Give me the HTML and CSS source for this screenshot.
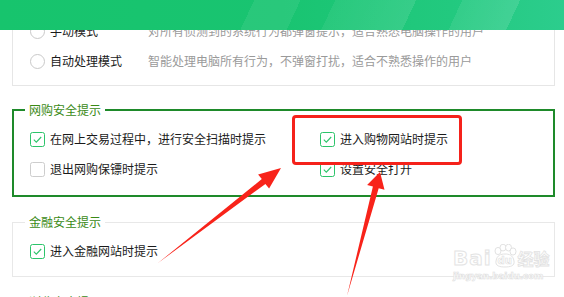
FILE: index.html
```html
<!DOCTYPE html>
<html lang="zh-CN">
<head>
<meta charset="utf-8">
<title>安全提示设置</title>
<link rel="stylesheet" href="styles.css">
</head>
<body>
<div class="page">
  <header class="topbar"></header>
  <main class="content">
    <section class="panel panel-modes">
      <div class="mode-row">
        <span class="radio"></span>
        <span class="mode-name">手动模式</span>
        <span class="mode-desc">对所有侦测到的系统行为都弹窗提示，适合熟悉电脑操作的用户</span>
      </div>
      <div class="mode-row">
        <span class="radio"></span>
        <span class="mode-name">自动处理模式</span>
        <span class="mode-desc">智能处理电脑所有行为，不弹窗打扰，适合不熟悉操作的用户</span>
      </div>
    </section>

    <fieldset class="group group-active">
      <legend>网购安全提示</legend>
      <div class="opts opts-two">
        <label class="opt"><span class="cb on"><svg viewBox="0 0 15 15"><rect x="0.5" y="0.5" width="14" height="14" rx="2"/><polyline points="3.8,7.6 6.3,10.1 11.2,5"/></svg></span>在网上交易过程中，进行安全扫描时提示</label>
        <label class="opt"><span class="cb on"><svg viewBox="0 0 15 15"><rect x="0.5" y="0.5" width="14" height="14" rx="2"/><polyline points="3.8,7.6 6.3,10.1 11.2,5"/></svg></span>进入购物网站时提示</label>
        <label class="opt"><span class="cb"><svg viewBox="0 0 15 15"><rect x="0.5" y="0.5" width="14" height="14" rx="2"/></svg></span>退出网购保镖时提示</label>
        <label class="opt"><span class="cb on"><svg viewBox="0 0 15 15"><rect x="0.5" y="0.5" width="14" height="14" rx="2"/><polyline points="3.8,7.6 6.3,10.1 11.2,5"/></svg></span>设置安全打开</label>
      </div>
    </fieldset>

    <fieldset class="group">
      <legend>金融安全提示</legend>
      <div class="opts">
        <label class="opt"><span class="cb on"><svg viewBox="0 0 15 15"><rect x="0.5" y="0.5" width="14" height="14" rx="2"/><polyline points="3.8,7.6 6.3,10.1 11.2,5"/></svg></span>进入金融网站时提示</label>
      </div>
    </fieldset>

    <fieldset class="group">
      <legend>浏览安全提示</legend>
      <div class="opts">
        <label class="opt"><span class="cb on"><svg viewBox="0 0 15 15"><rect x="0.5" y="0.5" width="14" height="14" rx="2"/><polyline points="3.8,7.6 6.3,10.1 11.2,5"/></svg></span>进入网站时提示</label>
      </div>
    </fieldset>
  </main>

  <div class="highlight"></div>

  <svg class="arrows" viewBox="0 0 564 297" width="564" height="297">
    <polygon points="158,263 261.8,179.1 258.1,174.4 281,168 269.1,188.6 265.4,183.9"/>
    <polygon points="347,296 372.9,186.6 367.1,185 380,172 384.5,189.8 378.7,188.2"/>
  </svg>

  <div class="watermark">
    <div class="wm-top">
      <span class="wm-bai">Bai</span>
      <span class="wm-paw">
        <svg viewBox="0 0 26 24" width="26" height="24">
          <ellipse cx="6" cy="7" rx="3" ry="3.6"/>
          <ellipse cx="11" cy="3.6" rx="3" ry="3.4"/>
          <ellipse cx="16.5" cy="3.6" rx="3" ry="3.4"/>
          <ellipse cx="21" cy="7.5" rx="3" ry="3.6"/>
          <path d="M4 17 C5 11 9 10 13 10 C17 10 21 11 22 17 C23 22 18 23 13 23 C8 23 3 22 4 17 Z"/>
        </svg>
        <span class="wm-du">du</span>
      </span>
      <span class="wm-jy">经验</span>
    </div>
    <div class="wm-url">jingyan.baidu.com</div>
  </div>
</div>
</body>
</html>
```

FILE: styles.css
```css
* { box-sizing: border-box; }

html, body {
  margin: 0;
  padding: 0;
  background: #ffffff;
}

body {
  font-family: "Noto Sans CJK SC", "Noto Sans", sans-serif;
  font-size: 12px;
  color: #222;
  overflow: hidden;
}

.page {
  position: relative;
  width: 564px;
  height: 297px;
  overflow: hidden;
}

.topbar {
  position: absolute;
  top: 0;
  left: 0;
  width: 564px;
  height: 30px;
  z-index: 5;
  background:
    linear-gradient(115deg, rgba(255,255,255,0) 0%, rgba(255,255,255,0) 44%, rgba(255,255,255,0.07) 44%, rgba(255,255,255,0.07) 52%, rgba(255,255,255,0) 52%, rgba(255,255,255,0) 58%, rgba(255,255,255,0.06) 58%, rgba(255,255,255,0.10) 72%, rgba(255,255,255,0) 72%, rgba(255,255,255,0) 80%, rgba(255,255,255,0.08) 80%, rgba(255,255,255,0.12) 90%, rgba(255,255,255,0) 90%),
    linear-gradient(90deg, #17c46d 0%, #19c471 50%, #22c97f 80%, #2ccd8d 100%);
}

.content {
  padding: 0 9px 0 12px;
  display: flex;
  flex-direction: column;
}

.panel {
  border: 1px solid #e6e6e6;
  padding: 15px 0 9px 17px;
  display: flex;
  flex-direction: column;
}

.mode-row {
  height: 30px;
  display: flex;
  align-items: center;
  line-height: 16px;
}

.radio {
  width: 15px;
  height: 15px;
  border: 1px solid #c9c9c9;
  border-radius: 50%;
  background: #fff;
  margin-right: 5px;
  flex: none;
}

.mode-name {
  width: 98px;
  color: #1a1a1a;
  flex: none;
}

.mode-desc {
  color: #9a9a9a;
  white-space: nowrap;
}

.group {
  margin: 16px 0 0 0;
  min-width: 0;
  border: 1px solid #e8e8e8;
  padding: 6px 0 10px 12px;
}

.group + .group { margin-top: 17px; }

.group-active {
  border: 2px solid #1e8a2a;
  padding-left: 11px;
  padding-bottom: 11px;
}

.group legend {
  padding: 0 4px;
  line-height: 16px;
  font-size: 12px;
  color: #3a8a16;
}

.opts {
  padding-left: 5px;
  display: grid;
  grid-template-columns: 1fr;
}

.opts-two {
  grid-template-columns: 290px 1fr;
}

.opt {
  height: 30px;
  display: flex;
  align-items: center;
  line-height: 16px;
  color: #1a1a1a;
  white-space: nowrap;
}

.cb {
  width: 15px;
  height: 15px;
  margin-right: 5px;
  flex: none;
  display: block;
}

.cb svg {
  display: block;
  width: 15px;
  height: 15px;
}

.cb rect {
  fill: #fff;
  stroke: #cdcdcd;
  stroke-width: 1;
}

.cb.on rect { stroke: #2cc46a; }

.cb polyline {
  fill: none;
  stroke: #2cc46a;
  stroke-width: 1.1;
}

.highlight {
  position: absolute;
  left: 292px;
  top: 115px;
  width: 170px;
  height: 50px;
  border: 3px solid #f5221b;
  border-radius: 4px;
  z-index: 3;
}

.arrows {
  position: absolute;
  left: 0;
  top: 0;
  z-index: 4;
}

.arrows polygon { fill: #f8231a; }

.watermark {
  position: absolute;
  left: 453px;
  top: 238px;
  z-index: 2;
  color: #fff;
  display: flex;
  flex-direction: column;
  align-items: flex-start;
  font-family: "DejaVu Sans", sans-serif;
}

.wm-top {
  display: flex;
  align-items: flex-end;
  height: 30px;
}

.wm-bai {
  font-size: 20px;
  font-weight: bold;
  line-height: 20px;
  color: #fff;
  -webkit-text-stroke: 1px #e4e4e4;
  letter-spacing: 1px;
}

.wm-paw {
  position: relative;
  width: 26px;
  height: 26px;
  display: flex;
  align-items: flex-end;
  justify-content: center;
}

.wm-paw svg { position: absolute; left: 0; bottom: 0; }

.wm-paw ellipse, .wm-paw path {
  fill: #fff;
  stroke: #e2e2e2;
  stroke-width: 1;
}

.wm-du {
  position: relative;
  font-size: 10px;
  font-weight: bold;
  line-height: 12px;
  color: #fff;
  -webkit-text-stroke: 0.6px #dcdcdc;
  margin-bottom: 1px;
}

.wm-jy {
  font-family: "Noto Sans CJK SC", sans-serif;
  font-size: 16px;
  line-height: 20px;
  font-weight: bold;
  color: #fff;
  -webkit-text-stroke: 0.8px #e2e2e2;
}

.wm-url {
  font-size: 9px;
  line-height: 13px;
  color: #fff;
  -webkit-text-stroke: 0.6px #dedede;
  font-weight: bold;
  letter-spacing: -0.2px;
  white-space: nowrap;
  margin-top: 2px;
}
```
